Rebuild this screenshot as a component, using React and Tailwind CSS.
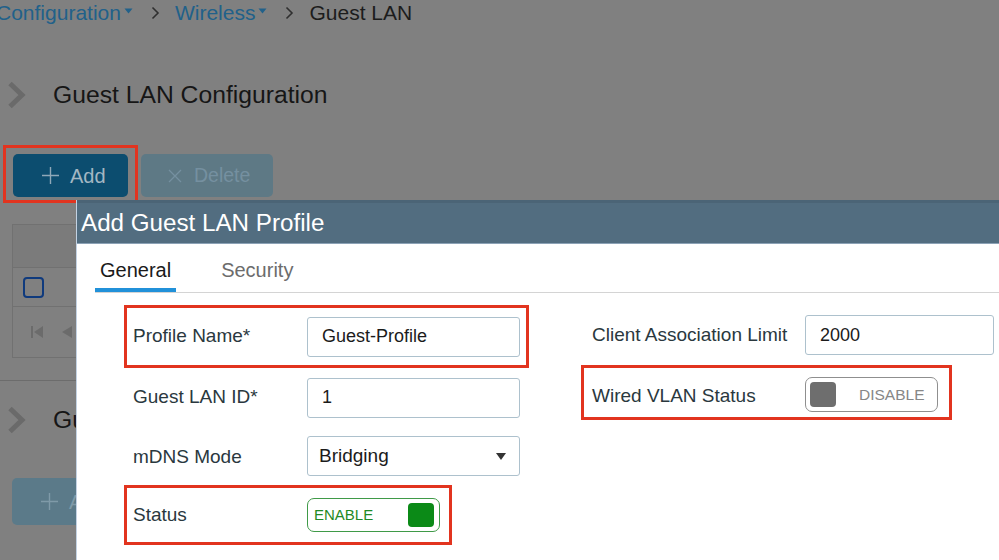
import React from 'react';

const Caret = () => (
  <svg width="9" height="6" viewBox="0 0 9 6" className="mx-[3px] mb-[4px]">
    <path d="M0.5 0.5 L8.5 0.5 L4.5 5.5 Z" fill="#21618a" />
  </svg>
);

const Crumb = () => (
  <svg width="9" height="14" viewBox="0 0 9 14" className="mx-[15px]">
    <path d="M1.5 1.5 L7 7 L1.5 12.5" fill="none" stroke="#2f2f2f" strokeWidth="1.6" />
  </svg>
);

const BigChevron = () => (
  <svg width="20" height="28" viewBox="0 0 20 28">
    <path d="M3 2.5 L15 14 L3 25.5" fill="none" stroke="#6a6a6a" strokeWidth="5" />
  </svg>
);

const Plus = ({ color }) => (
  <svg width="17" height="17" viewBox="0 0 17 17" className="mr-[11px]">
    <path d="M8.5 0 V17 M0 8.5 H17" stroke={color} strokeWidth="1.4" />
  </svg>
);

const Toggle = ({ on }) =>
  on ? (
    <div className="flex h-[34px] w-[133px] items-center justify-between rounded-[7px] border-[1.5px] border-[#3f9a48] bg-white pl-[6px] pr-[5px]">
      <span className="text-[15px] font-medium text-[#1f8a25]">ENABLE</span>
      <span className="h-[24px] w-[26px] rounded-[4px] bg-[#0b8a17]" />
    </div>
  ) : (
    <div className="flex h-[35px] w-[133px] items-center rounded-[7px] border-[1.5px] border-[#8f8f8f] bg-white pl-[4px]">
      <span className="h-[25px] w-[26px] rounded-[4px] bg-[#6e6e6e]" />
      <span className="ml-[23px] text-[15.5px] text-[#878787]">DISABLE</span>
    </div>
  );

const inputCls =
  'flex h-[40px] items-center rounded-[3px] border border-[#adc1cd] bg-white text-[18px] text-[#1b1b1b]';

export default function App() {
  return (
    <div
      className="relative h-[560px] w-[999px] overflow-hidden bg-[#808080]"
      style={{ fontFamily: '"Liberation Sans", Arial, sans-serif' }}
    >
      {/* page behind the overlay */}
      <div className="flex flex-col">
        <div className="ml-[-4px] flex h-[24px] items-center pt-[1px] text-[21px] leading-[24px]">
          <span className="text-[#21618a]">Configuration</span>
          <Caret />
          <Crumb />
          <span className="text-[#21618a]">Wireless</span>
          <Caret />
          <Crumb />
          <span className="text-[#1c1c1c]">Guest LAN</span>
        </div>

        <div className="mt-[51px] flex h-[40px] items-center pl-[7px]">
          <BigChevron />
          <span className="ml-[26px] text-[24.7px] text-[#161616]">Guest LAN Configuration</span>
        </div>

        <div className="mt-[30px] flex items-start pl-[3px]">
          <div className="border-[3px] border-[#e2341f] px-[7px] pb-[3px] pt-[6px]">
            <div className="flex h-[43px] w-[115px] items-center rounded-[5px] bg-[#0c4d6f] pl-[29px] text-[20px] text-[#a3b7c3]">
              <Plus color="#8fa8b8" />
              Add
            </div>
          </div>
          <div className="ml-[3px] mt-[9px] flex h-[43px] w-[132px] items-center rounded-[5px] bg-[#5e7985] pl-[27px] text-[19.5px] text-[#7590a0]">
            <svg width="14" height="14" viewBox="0 0 14 14" className="mr-[12px]">
              <path d="M1 1 L13 13 M13 1 L1 13" stroke="#7590a0" strokeWidth="1.3" />
            </svg>
            Delete
          </div>
        </div>

        <div className="ml-[12px] mt-[21px] w-[200px] border border-[#717171]">
          <div className="h-[43px] border-b border-[#717171] bg-[#7b7b7b]" />
          <div className="flex h-[39px] items-center border-b border-[#717171] pl-[10px]">
            <span className="h-[21px] w-[21px] rounded-[4px] border-[2px] border-[#0f3a7d]" />
          </div>
          <div className="flex h-[50px] items-center gap-[19px] pl-[18px]">
            <svg width="12" height="12" viewBox="0 0 12 12">
              <rect x="0" y="0" width="2" height="12" fill="#6b6b6b" />
              <path d="M12 0 L3 6 L12 12 Z" fill="#6b6b6b" />
            </svg>
            <svg width="10" height="12" viewBox="0 0 10 12">
              <path d="M10 0 L0 6 L10 12 Z" fill="#6b6b6b" />
            </svg>
          </div>
        </div>

        <div className="mt-[22px] h-[1px] w-full bg-[#6c6c6c]" />

        <div className="mt-[19px] flex h-[40px] items-center pl-[7px]">
          <BigChevron />
          <span className="ml-[26px] text-[24.7px] text-[#161616]">Guest LAN Settings</span>
        </div>

        <div className="ml-[12px] mt-[38px] flex h-[47px] w-[120px] items-center rounded-[5px] bg-[#5b7a89] pl-[29px] text-[20px] text-[#7f9aa8]">
          <Plus color="#7f9aa8" />
          Add
        </div>
      </div>

      {/* modal */}
      <div className="absolute left-[76px] top-[200px] flex h-[400px] w-[960px] flex-col border-l border-[#c3d2e3] bg-white">
        <div className="flex h-[44px] items-center border-b border-[#8ca2b6] border-t-[3px] border-t-[#4b6476] bg-[#526d80] pl-[4px] text-[24.2px] text-white">
          Add Guest LAN Profile
        </div>

        <div className="ml-[18px] flex items-end gap-[40px] border-b border-[#d4d4d4] pt-[14px] text-[20px] leading-[24px]">
          <div className="rounded-t-[3px] border-b-[4px] border-[#2191d9] px-[5px] pb-[6px] text-[#1a1a1a]">General</div>
          <div className="border-b-[4px] border-transparent px-[5px] pb-[6px] text-[#6c6c6c]">Security</div>
        </div>

        <div className="ml-[47px] mt-[12px] flex text-[19px] text-[#2a383e]">
          {/* left column */}
          <div className="flex w-[405px] flex-col">
            <div className="flex h-[63px] items-center border-[3px] border-[#e2341f] px-[6px]">
              <span className="w-[174px]">Profile Name*</span>
              <div className={`${inputCls} w-[213px] pl-[14px]`}>Guest-Profile</div>
            </div>
            <div className="flex h-[59px] items-center border-[3px] border-transparent px-[6px]">
              <span className="w-[174px]">Guest LAN ID*</span>
              <div className={`${inputCls} w-[213px] pl-[14px]`}>1</div>
            </div>
            <div className="flex h-[58px] items-center border-[3px] border-transparent px-[6px]">
              <span className="w-[174px] pt-[3px]">mDNS Mode</span>
              <div className={`${inputCls} h-[37px] w-[213px] justify-between pl-[11px] pr-[13px] text-[19px]`}>
                Bridging
                <svg width="10" height="7" viewBox="0 0 10 7">
                  <path d="M0 0 L10 0 L5 7 Z" fill="#333" />
                </svg>
              </div>
            </div>
            <div className="flex h-[60px] w-[328px] items-center border-[3px] border-[#e2341f] px-[6px]">
              <span className="w-[174px]">Status</span>
              <Toggle on />
            </div>
          </div>

          {/* right column */}
          <div className="ml-[52px] flex w-[420px] flex-col">
            <div className="flex h-[60px] items-center border-[3px] border-transparent pl-[8px]">
              <span className="w-[213px]">Client Association Limit</span>
              <div className={`${inputCls} w-[189px] pl-[14px]`}>2000</div>
            </div>
            <div className="flex h-[55px] w-[371px] items-center border-[3px] border-[#e2341f] pl-[8px] pt-[4px]">
              <span className="w-[213px] pt-[3px]">Wired VLAN Status</span>
              <Toggle on={false} />
            </div>
          </div>
        </div>
      </div>
    </div>
  );
}
